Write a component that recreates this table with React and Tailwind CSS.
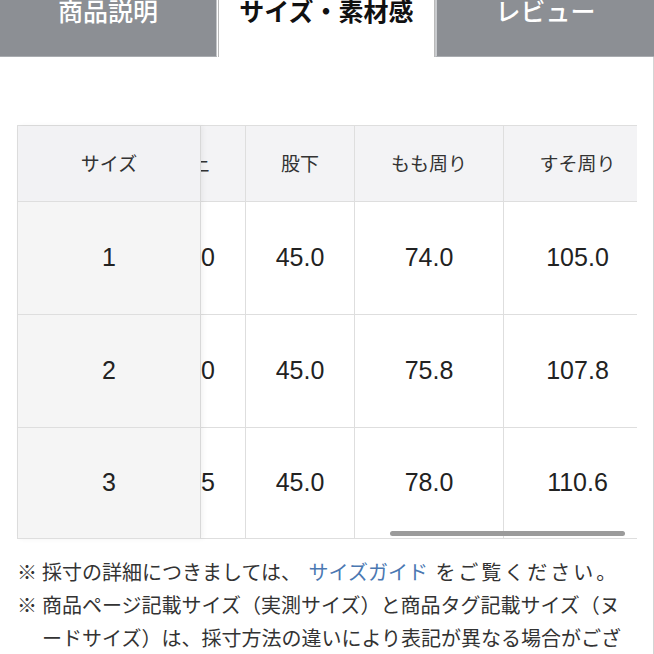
const jp = { fontFamily: '"Noto Sans CJK JP", "Noto Sans", sans-serif' }
const num = { fontFamily: '"Liberation Sans", Arial, sans-serif' }

const cols = [
  { label: "股上", w: "w-[110px]", vals: ["30.0", "30.0", "30.5"] },
  { label: "股下", w: "w-[109px]", vals: ["45.0", "45.0", "45.0"] },
  { label: "もも周り", w: "w-[149px]", vals: ["74.0", "75.8", "78.0"] },
  { label: "すそ周り", w: "w-[148px]", vals: ["105.0", "107.8", "110.6"] },
]
const rowH = ["h-[113px]", "h-[113px]", "h-[111px]"]

function Tab({ label, active, className }) {
  return (
    <div
      className={
        "h-[57px] flex justify-center items-start " +
        (active
          ? "bg-white text-[#111] font-bold border-x border-[#b9b9b9] "
          : "bg-[#8c8f94] text-white font-medium border-b border-[#a9acb0] ") +
        className
      }
    >
      <span className="-mt-[5px] text-[25px] leading-[30px]" style={jp}>{label}</span>
    </div>
  )
}

export default function App() {
  return (
    <div className="w-[654px] h-[654px] overflow-hidden bg-white" style={jp}>
      <div className="flex">
        <Tab label="商品説明" className="w-[217px] border-r border-r-[#c4c6c9]" />
        <Tab label="サイズ・素材感" active className="ml-[1px] w-[217px]" />
        <Tab label="レビュー" className="flex-1 border-l-2 border-l-[#c9cbce]" />
      </div>

      <div className="border-r border-[#d4d4d4] pt-[68px] h-[597px]">
        <div className="relative ml-[17px] w-[620px] flex border-t border-l border-[#dedede]">
          <div className="w-[183px] shrink-0 border-r border-[#d8d8d8] bg-[#f5f5f5] shadow-[2px_0_5px_rgba(0,0,0,0.05)] z-10">
            <div className="h-[76px] flex items-center justify-center border-b border-[#dedede] bg-[#f2f2f4] text-[19px] text-[#333]">
              サイズ
            </div>
            {["1", "2", "3"].map((s, i) => (
              <div
                key={s}
                className={rowH[i] + " flex items-center justify-center border-b border-[#dedede] text-[25px] text-[#222]"}
                style={num}
              >
                {s}
              </div>
            ))}
          </div>

          <div className="flex-1 overflow-hidden">
            <div className="flex -ml-[65px] w-max">
              {cols.map((c) => (
                <div key={c.label} className={c.w + " shrink-0"}>
                  <div className="h-[76px] flex items-center justify-center border-b border-r border-[#dedede] bg-[#f3f3f5] text-[19px] text-[#333]">
                    {c.label}
                  </div>
                  {c.vals.map((v, i) => (
                    <div
                      key={i}
                      className={rowH[i] + " flex items-center justify-center border-b border-r border-[#dedede] text-[25px] text-[#222]"}
                      style={num}
                    >
                      {v}
                    </div>
                  ))}
                </div>
              ))}
            </div>
          </div>

          <div className="absolute left-[372px] top-[405px] w-[235px] h-[5px] rounded-full bg-[#9b9b9b]" />
        </div>

        <div className="mt-[16px] pl-[17px] text-[20px] leading-[33px] text-[#333]">
          <div className="flex">
            <span className="w-[25px] shrink-0">※</span>
            <span>
              採寸の詳細につきましては、 <span className="ml-[3px] text-[#4b78b2]">サイズガイド</span>{" "}
              <span className="ml-[3px] tracking-[3px]">をご覧ください。</span>
            </span>
          </div>
          <div className="flex">
            <span className="w-[25px] shrink-0">※</span>
            <span>
              商品ページ記載サイズ（実測サイズ）と商品タグ記載サイズ（ヌ
              <br />
              ードサイズ）は、採寸方法の違いにより表記が異なる場合がござ
              <br />
              います。
            </span>
          </div>
        </div>
      </div>
    </div>
  )
}
